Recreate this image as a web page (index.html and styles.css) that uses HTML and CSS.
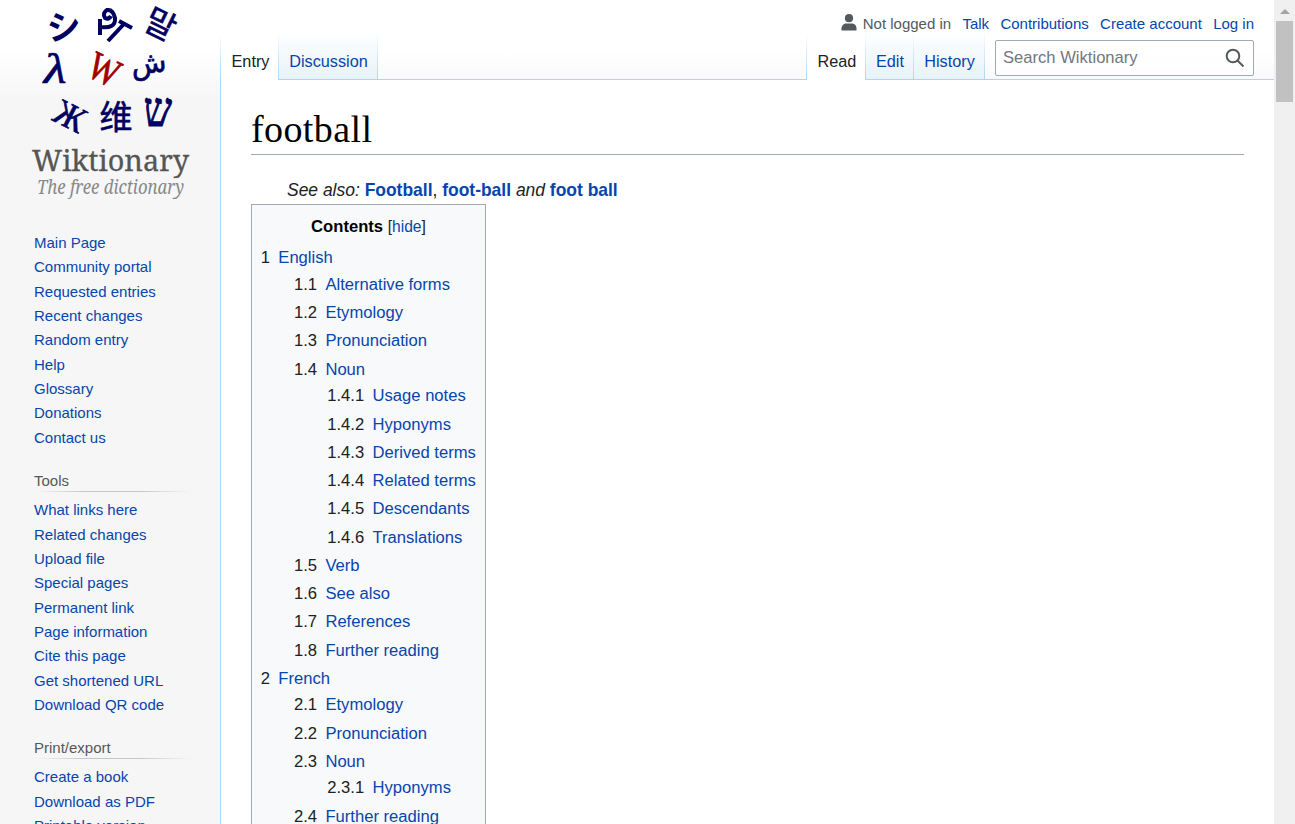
FILE: index.html
```html
<!DOCTYPE html>
<html lang="en">
<head>
<meta charset="utf-8">
<title>football - Wiktionary</title>
<link rel="stylesheet" href="styles.css">
</head>
<body>
<div class="page">
<aside class="sidebar">
<svg class="logo" width="200" height="200" viewBox="0 0 200 200">
<g class="glyphs">
<text x="54" y="39" font-size="34" text-anchor="middle" class="heavy" transform="rotate(-6 54 27)">シ</text>
<path d="M90 19V35M90 27Q106 29 105 18Q103 9 97 10Q92 13 95 18Q99 20 101 16M98 41L113 25M109 21L122 28" fill="none" stroke="#000060" stroke-width="4"/>
<text x="150" y="36" font-size="33" text-anchor="middle" class="medium" transform="rotate(26 150 25)">말</text>
<text x="45" y="83" font-size="42" text-anchor="middle" class="serif outline" font-style="italic" transform="translate(-11 0) scale(1.25 1)">λ</text>
<text x="96" y="82" font-size="38" text-anchor="middle" class="serif red" transform="translate(94 70) rotate(26) scale(.85 1.05) translate(-96 -70)">W</text>
<text x="139" y="73" font-size="29" text-anchor="middle" class="arabic" transform="rotate(-6 139 67)">ش</text>
<text x="60" y="128" font-size="36" text-anchor="middle" class="serif outline" transform="translate(60 116) rotate(27) scale(.95 1) translate(-60 -116)">Ж</text>
<text x="106" y="129" font-size="33" text-anchor="middle" class="medium">维</text>
<text x="148" y="126" font-size="48" text-anchor="middle" class="hebrew" transform="translate(25 0) scale(.83 1)">ש</text>
</g>
<text class="wordmark" x="22" y="171" textLength="157" lengthAdjust="spacingAndGlyphs">Wiktionary</text>
<text class="tagline" x="27" y="194" textLength="147" lengthAdjust="spacingAndGlyphs">The free dictionary</text>
</svg>
<nav class="portal first"><ul>
<li><a>Main Page</a></li><li><a>Community portal</a></li><li><a>Requested entries</a></li><li><a>Recent changes</a></li><li><a>Random entry</a></li><li><a>Help</a></li><li><a>Glossary</a></li><li><a>Donations</a></li><li><a>Contact us</a></li>
</ul></nav>
<nav class="portal"><h3>Tools</h3><ul>
<li><a>What links here</a></li><li><a>Related changes</a></li><li><a>Upload file</a></li><li><a>Special pages</a></li><li><a>Permanent link</a></li><li><a>Page information</a></li><li><a>Cite this page</a></li><li><a>Get shortened URL</a></li><li><a>Download QR code</a></li>
</ul></nav>
<nav class="portal"><h3>Print/export</h3><ul>
<li><a>Create a book</a></li><li><a>Download as PDF</a></li><li><a>Printable version</a></li>
</ul></nav>
</aside>
<div class="main">
<header class="head">
<div class="tabs left"><a class="tab selected entry">Entry</a><a class="tab discussion">Discussion</a></div>
<div class="right-head">
<div class="personal">
<svg class="user" width="16" height="17" viewBox="0 0 16 17"><circle cx="8" cy="4.2" r="4.1"/><path d="M.5 16.5v-2.3C.5 11 3 9.4 5.500 9.400h5c3 0 5 1.600 5 4.800v2.300z"/></svg>
<span>Not logged in</span><a>Talk</a><a>Contributions</a><a>Create account</a><a>Log in</a>
</div>
<div class="actions">
<div class="tabs views"><a class="tab selected read">Read</a><a class="tab edit">Edit</a><a class="tab history">History</a></div>
<div class="search"><span>Search Wiktionary</span><svg width="20" height="20" viewBox="0 0 20 20"><circle cx="8" cy="8" r="6.300"/><path d="M12.500 12.500l6 6"/></svg></div>
</div>
</div>
</header>
<main class="content">
<h1>football</h1>
<div class="see-also">See also: <b>Football</b><span class="plain">, </span><b>foot-ball</b> and <b>foot ball</b></div>
<div class="toc">
<div class="toc-title"><b>Contents</b> <span>[<a>hide</a>]</span></div>
<ul>
<li><div class="row"><span>1</span><a>English</a></div>
<ul>
<li><div class="row"><span>1.1</span><a>Alternative forms</a></div></li>
<li><div class="row"><span>1.2</span><a>Etymology</a></div></li>
<li><div class="row"><span>1.3</span><a>Pronunciation</a></div></li>
<li><div class="row"><span>1.4</span><a>Noun</a></div>
<ul>
<li><div class="row"><span>1.4.1</span><a>Usage notes</a></div></li>
<li><div class="row"><span>1.4.2</span><a>Hyponyms</a></div></li>
<li><div class="row"><span>1.4.3</span><a>Derived terms</a></div></li>
<li><div class="row"><span>1.4.4</span><a>Related terms</a></div></li>
<li><div class="row"><span>1.4.5</span><a>Descendants</a></div></li>
<li><div class="row"><span>1.4.6</span><a>Translations</a></div></li>
</ul></li>
<li><div class="row"><span>1.5</span><a>Verb</a></div></li>
<li><div class="row"><span>1.6</span><a>See also</a></div></li>
<li><div class="row"><span>1.7</span><a>References</a></div></li>
<li><div class="row"><span>1.8</span><a>Further reading</a></div></li>
</ul></li>
<li><div class="row"><span>2</span><a>French</a></div>
<ul>
<li><div class="row"><span>2.1</span><a>Etymology</a></div></li>
<li><div class="row"><span>2.2</span><a>Pronunciation</a></div></li>
<li><div class="row"><span>2.3</span><a>Noun</a></div>
<ul><li><div class="row"><span>2.3.1</span><a>Hyponyms</a></div></li></ul></li>
<li><div class="row"><span>2.4</span><a>Further reading</a></div></li>
</ul></li>
</ul>
</div>
</main>
</div>
<div class="scrollbar"><i class="up"></i><i class="thumb"></i><i class="down"></i></div>
</div>
</body>
</html>
```
FILE: styles.css
```css
* { box-sizing: border-box; }
body { margin: 0; overflow: hidden; background: #f6f6f6; color: #202122; font-family: "Liberation Sans", Arial, sans-serif; }
a, b { color: #0645ad; }
ul { list-style: none; margin: 0; padding: 0; }
.page { display: grid; grid-template-columns: 220px 1fr 21px; height: 824px; overflow: hidden; background: linear-gradient(#fff 50%, #f6f6f6) 0 0 / 100% 100px no-repeat; }
.sidebar { padding-left: 10px; font-size: 15px; height: 824px; overflow: hidden; }
.logo { display: block; overflow: visible; }
.glyphs text { fill: #000060; font-family: "Noto Sans CJK SC", sans-serif; }
.glyphs .heavy { font-weight: bold; }
.glyphs .medium { stroke: #000060; stroke-width: .6px; }
.glyphs .serif { font-family: "Liberation Serif", serif; }
.glyphs .outline { stroke: #000060; stroke-width: .7px; }
.glyphs .arabic { font-family: "DejaVu Sans", sans-serif; stroke: #000060; stroke-width: .6px; }
.glyphs .hebrew { font-family: "Liberation Serif", serif; stroke: #000060; stroke-width: 1px; }
.glyphs .red { fill: #a00000; stroke: #a00000; stroke-width: .8px; }
.wordmark { font: 29px "Noto Serif", "Liberation Serif", serif; fill: #555; stroke: #555; stroke-width: .3px; }
.tagline { font: italic 19px "Noto Serif", "Liberation Serif", serif; fill: #888; }
.portal { margin-left: 24px; margin-bottom: 21.1px; }
.portal.first { padding-top: 31px; }
.portal h3 { height: 21px; margin: 0 28px 6.2px 0; font-size: 15px; font-weight: normal; line-height: 20px; color: #54595d; background: linear-gradient(90deg, rgba(200,204,209,0), #c4c6c8 33%, #c4c6c8 66%, rgba(200,204,209,0)) 0 100% / 100% 1px no-repeat; }
.portal li { height: 24.34px; line-height: 24.34px; }
.main { min-width: 0; display: flex; flex-direction: column; }
.head { display: flex; justify-content: space-between; height: 80px; background: linear-gradient(#a7d7f9, #a7d7f9) 0 100% / 100% 1px no-repeat; }
.tabs { display: flex; align-items: flex-end; font-size: 16.25px; }
.tab { height: 48px; padding: 20px 0 0 1px; line-height: 20px; text-align: center; border-right: 1px solid; border-image: linear-gradient(#fff, #a7d7f9) 1; margin-bottom: 1px; background: linear-gradient(#fff, #e8f2f8); }
.tab.selected { height: 49px; padding: 20px 0 0 2px; margin-bottom: 0; color: #202122; background: linear-gradient(#fff, #fff); }
.left, .views { background: linear-gradient(#fff, #a7d7f9) 0 100% / 1px 48px no-repeat; padding-left: 1px; }
.entry { width: 58px; }
.discussion { width: 99px; }
.right-head { width: 468px; padding-top: 14px; }
.personal { position: relative; z-index: 1; display: flex; justify-content: flex-end; padding-right: 20px; gap: 11.3px; height: 17px; font-size: 15px; line-height: 20px; color: #54595d; white-space: nowrap; }
.user { fill: #54595d; margin-right: -6px; }
.actions { display: flex; height: 49px; }
.read { width: 59px; }
.edit { width: 48px; }
.history { width: 71px; }
.search { display: flex; align-items: center; justify-content: space-between; width: 259px; height: 36px; margin: 9px 0 0 10px; padding: 0 8px 0 7px; background: rgba(255,255,255,.5); border: 1px solid #a2a9b1; border-radius: 2px; color: #72777d; font-size: 16.6px; }
.search span { line-height: 34px; }
.search svg { fill: none; stroke: #54595d; stroke-width: 2; }
.content { flex: 1; min-height: 0; overflow: hidden; background: #fff; border-left: 1px solid #a7d7f9; padding: 25px 30px 0; }
h1 { margin: 0; height: 50px; font: 38px/48px "Liberation Serif", serif; letter-spacing: .4px; color: #000; border-bottom: 1px solid #a2a9b1; }
.see-also { margin-top: 21px; height: 28px; padding-left: 36px; line-height: 28px; font-size: 17.47px; font-style: italic; white-space: nowrap; }
.see-also b, .plain { font-style: normal; }
.toc { width: 235px; padding: 8.75px; background: #f8f9fa; border: 1px solid #a2a9b1; font-size: 16.625px; line-height: 26.6px; }
.toc-title { text-align: center; height: 31.6px; }
.toc-title b { color: #000; }
.toc-title span { font-size: 15.6px; }
.toc li { margin-bottom: 1.6625px; }
.toc ul ul { margin-left: 33.25px; }
.row { display: flex; gap: 8.3px; white-space: nowrap; }
.scrollbar { background: #f0f0f0; display: flex; flex-direction: column; align-items: center; }
.up, .down { width: 0; height: 0; border: 5px solid transparent; border-top: 0; border-bottom: 5px solid #a3a3a3; margin: 9px 0 7px; }
.thumb { width: 17px; height: 81px; background: #c1c1c1; }
.down { border-top: 5px solid #505050; border-bottom: 0; margin: auto 0 9px; }
```
